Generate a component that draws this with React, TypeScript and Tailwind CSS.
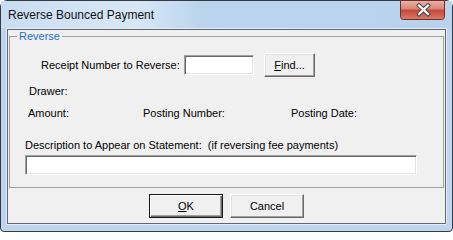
import React from 'react';

const font = { fontFamily: '"Liberation Sans", Arial, sans-serif' };

function CloseButton() {
  return (
    <svg width="45" height="20" viewBox="0 0 45 20" className="-mt-px mr-[1px] shrink-0">
      <defs>
        <linearGradient id="cg" x1="0" y1="0" x2="0" y2="1">
          <stop offset="0" stopColor="#eab3a8" />
          <stop offset="0.45" stopColor="#d98473" />
          <stop offset="0.5" stopColor="#c5473a" />
          <stop offset="1" stopColor="#dc7d68" />
        </linearGradient>
      </defs>
      <path d="M0.5 0.5 H44.5 V16.5 Q44.5 19.5 41.5 19.5 H3.5 Q0.5 19.5 0.5 16.5 Z" fill="url(#cg)" stroke="#6a2f28" />
      <path d="M19 5.5 L28 14 M28 5.5 L19 14" stroke="#4a4a4a" strokeWidth="4.2" strokeLinecap="square" />
      <path d="M19 5.5 L28 14 M28 5.5 L19 14" stroke="#ffffff" strokeWidth="2.2" strokeLinecap="square" />
    </svg>
  );
}

function Button({ children, isDefault, className }: { children: React.ReactNode; isDefault?: boolean; className: string }) {
  return (
    <button
      className={
        'flex items-center justify-center bg-[#f0f0f0] text-[11px] text-black ' +
        (isDefault
          ? 'border border-[#1a1a1a] shadow-[inset_1px_1px_0_#ffffff,inset_-1px_-1px_0_#696969,inset_-2px_-2px_0_#a0a0a0] '
          : 'border border-t-white border-l-white border-r-[#696969] border-b-[#696969] shadow-[inset_-1px_-1px_0_#a0a0a0,inset_1px_1px_0_#e3e3e3] ') +
        className
      }
      style={font}
    >
      {children}
    </button>
  );
}

function TextBox({ className }: { className: string }) {
  return (
    <div
      className={
        'bg-white border border-t-[#a0a0a0] border-l-[#a0a0a0] border-r-white border-b-white shadow-[inset_1px_1px_0_#696969,inset_-1px_-1px_0_#e3e3e3] ' +
        className
      }
    />
  );
}

export default function App() {
  return (
    <div className="w-[453px] h-[232px] bg-white" style={font}>
      <div className="flex h-full w-full flex-col rounded-t-[7px] rounded-b-[4px] border border-[#333a42] bg-[#bdd5ee] px-[5px] pb-[6px]">
        <div className="flex h-[27px] items-start justify-between bg-[linear-gradient(90deg,#c9ddf2_0%,#d8e7f6_30%,#bad4ee_45%,#b9d3ed_100%)] -mx-[5px] pl-[7px] pr-[6px]">
          <span className="mt-[7px] text-[12px] leading-[15px] text-[#111]">Reverse Bounced Payment</span>
          <CloseButton />
        </div>
        <div className="flex flex-1 flex-col border border-[#e2edf8]">
          <div className="flex flex-1 flex-col border border-[#5f6770] bg-[#f0f0f0] text-[11px] text-black">
            <fieldset className="mx-[1px] border border-[#a0a0a0] pb-[12px]">
              <legend className="ml-[7px] px-[2px] text-[11px] leading-[12px] text-[#1c6fce]">Reverse</legend>
              <div className="mt-[11px] flex h-[24px] items-center pl-[31px]">
                <span className="w-[143px] leading-[14px]">Receipt Number to Reverse:</span>
                <TextBox className="h-[20px] w-[70px]" />
                <Button className="ml-[10px] h-[24px] w-[51px]">
                  <span className="underline">F</span>ind...
                </Button>
              </div>
              <div className="mt-[7px] pl-[19px] leading-[14px]">Drawer:</div>
              <div className="mt-[8px] flex pl-[18px] leading-[14px]">
                <span className="w-[115px]">Amount:</span>
                <span className="w-[148px]">Posting Number:</span>
                <span>Posting Date:</span>
              </div>
              <div className="mt-[18px] pl-[15px] leading-[14px]">
                Description to Appear on Statement:&nbsp; (if reversing fee payments)
              </div>
              <div className="mt-[3px] pl-[15px]">
                <TextBox className="h-[20px] w-[392px]" />
              </div>
            </fieldset>
            <div className="mt-[6px] flex justify-center gap-[7px]">
              <Button isDefault className="h-[24px] w-[74px]">
                <span className="underline">O</span>K
              </Button>
              <Button className="h-[24px] w-[74px]">Cancel</Button>
            </div>
          </div>
        </div>
      </div>
    </div>
  );
}
